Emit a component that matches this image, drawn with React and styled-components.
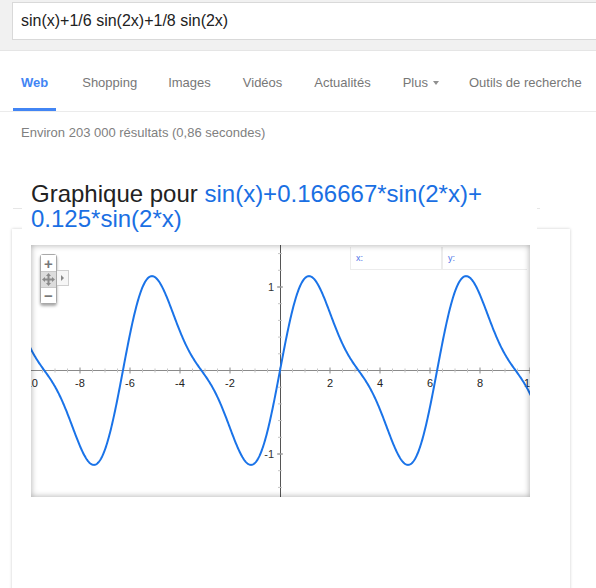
import React from 'react';
import styled, { createGlobalStyle } from 'styled-components';

const Global = createGlobalStyle`
  html, body { margin: 0; padding: 0; background: #fff; }
  body { font-family: Arial, "Liberation Sans", sans-serif; overflow: hidden; }
  * { box-sizing: border-box; }
`;

const Header = styled.header`
  height: 51px;
  background: #f1f1f1;
  border-bottom: 1px solid #e5e5e5;
  padding: 2px 0 0 12px;
`;

const SearchBox = styled.div`
  height: 38px;
  background: #fff;
  border: 1px solid #d9d9d9;
  border-right: none;
  padding-left: 8px;
  font-size: 16px;
  line-height: 36px;
  color: #222;
  white-space: nowrap;
`;

const Nav = styled.nav`
  display: flex;
  gap: 16px;
  padding-left: 13px;
  border-bottom: 1px solid #ebebeb;
`;

const Tab = styled.div`
  height: 60px;
  padding: 24px 8px 0;
  margin-left: ${p => p.$shift || 0}px;
  font-size: 13px;
  line-height: 15px;
  white-space: nowrap;
  color: ${p => (p.$active ? '#4285f4' : '#777')};
  font-weight: ${p => (p.$active ? 'bold' : 'normal')};
  border-bottom: 3px solid ${p => (p.$active ? '#4285f4' : 'transparent')};
`;

const Caret = styled.span`
  display: inline-block;
  margin-left: 5px;
  vertical-align: 2px;
  border-left: 3.5px solid transparent;
  border-right: 3.5px solid transparent;
  border-top: 4px solid #909090;
`;

const Stats = styled.div`
  padding: 13px 0 0 21px;
  font-size: 13px;
  line-height: 15px;
  color: #808080;
`;

const HeadingArea = styled.div`
  position: relative;
  margin: 41px 0 0 12px;
  &::before {
    content: '';
    position: absolute;
    top: 27px;
    left: 1px;
    width: 527px;
    height: 1px;
    background: #e6e6e6;
  }
`;

const Heading = styled.h2`
  position: relative;
  z-index: 1;
  margin: 0 0 0 10px;
  width: 515px;
  padding: 0 0 2px 9px;
  background: #fff;
  font-size: 24px;
  line-height: 25px;
  font-weight: normal;
  color: #222;
`;

const Formula = styled.span`
  color: #1a6fe3;
`;

const Card = styled.section`
  margin: -4px 0 0 12px;
  width: 558px;
  height: 380px;
  background: #fff;
  box-shadow: 0 0 3px rgba(0, 0, 0, 0.2);
  padding: 16px 0 0 19px;
`;

const GraphBox = styled.div`
  position: relative;
  width: 499px;
  height: 252px;
  overflow: hidden;
  background: #fff;
  &::after {
    content: '';
    position: absolute;
    inset: 0;
    box-shadow: inset 0 0 6px rgba(0, 0, 0, 0.35);
    pointer-events: none;
  }
`;

const Plot = styled.svg`
  display: block;
`;

const ZoomControl = styled.div`
  position: absolute;
  left: 9px;
  top: 9px;
  width: 17px;
  display: flex;
  flex-direction: column;
  background: #fff;
  border: 1px solid #a8a8a8;
  border-radius: 3px;
  box-shadow: 0 2px 3px rgba(0, 0, 0, 0.35);
`;

const ZoomButton = styled.div`
  height: 16px;
  display: flex;
  align-items: center;
  justify-content: center;
  background: ${p => (p.$pressed ? '#dcdcdc' : '#fff')};
  border-top: ${p => (p.$first ? 'none' : '1px solid #c8c8c8')};
  color: #777;
  font-size: 15px;
  font-weight: bold;
  line-height: 1;
`;

const SideTab = styled.div`
  position: absolute;
  left: 26px;
  top: 25px;
  width: 12px;
  height: 16px;
  background: #f6f6f6;
  border: 1px solid #cfcfcf;
  border-left: none;
  display: flex;
  align-items: center;
  justify-content: center;
  &::before {
    content: '';
    border-top: 3px solid transparent;
    border-bottom: 3px solid transparent;
    border-left: 3px solid #888;
  }
`;

const Coords = styled.div`
  position: absolute;
  top: 2px;
  left: 319px;
  right: 3px;
  height: 23px;
  display: grid;
  grid-template-columns: 90px 1fr;
  border-left: 1px solid #ececec;
  border-bottom: 1px solid #ececec;
  background: #fff;
`;

const Coord = styled.div`
  padding: 6px 0 0 5px;
  font-size: 9px;
  color: #4f74e8;
  border-left: ${p => (p.$divided ? '2px solid #ececec' : 'none')};
`;

const W = 499;
const H = 252;
const X0 = 249;
const Y0 = 125.5;
const SX = 25;
const SY = 83.5;
const f = x => Math.sin(x) + (1 / 6 + 1 / 8) * Math.sin(2 * x);

function buildPath() {
  let d = '';
  for (let px = -2; px <= W + 2; px += 0.5) {
    const x = (px - X0) / SX;
    const py = Y0 - f(x) * SY;
    d += (d ? 'L' : 'M') + px.toFixed(2) + ' ' + py.toFixed(2);
  }
  return d;
}

const curve = buildPath();

function Chart() {
  const xTicks = [];
  for (let k = -20; k <= 20; k++) {
    const px = X0 + k * 12.5;
    const major = k % 4 === 0;
    xTicks.push(
      <line key={'xt' + k} x1={px} x2={px} y1={Y0 - (major ? 3 : 2)} y2={Y0 + (major ? 3 : 2)}
        stroke={major ? '#888' : '#c4c4c4'} strokeWidth="1" />
    );
    if (major && k !== 0) {
      xTicks.push(
        <text key={'xl' + k} x={px} y={Y0 + 16} textAnchor="middle" fontSize="11"
          fontFamily="Arial, 'Liberation Sans', sans-serif" fill="#222">{k / 2}</text>
      );
    }
  }
  const yTicks = [];
  for (let k = -7; k <= 7; k++) {
    if (k === 0) continue;
    const py = Y0 - k * 0.2 * SY;
    yTicks.push(
      <line key={'yt' + k} x1={X0 - 2} x2={X0 + 2} y1={py} y2={py} stroke="#c4c4c4" strokeWidth="1" />
    );
  }
  [1, -1].forEach(v => {
    const py = Y0 - v * SY;
    yTicks.push(
      <line key={'ym' + v} x1={X0 - 3} x2={X0 + 3} y1={py} y2={py} stroke="#888" strokeWidth="1" />
    );
    yTicks.push(
      <text key={'yl' + v} x={X0 - 6} y={py + 4} textAnchor="end" fontSize="11"
        fontFamily="Arial, 'Liberation Sans', sans-serif" fill="#333">{v}</text>
    );
  });
  return (
    <Plot width={W} height={H} viewBox={`0 0 ${W} ${H}`}>
      <line x1="0" x2={W} y1={Y0} y2={Y0} stroke="#8a8a8a" strokeWidth="1" />
      <line x1={X0 + 0.5} x2={X0 + 0.5} y1="0" y2={H} stroke="#555" strokeWidth="1" />
      {xTicks}
      {yTicks}
      <path d={curve} fill="none" stroke="#1a73e8" strokeWidth="2" strokeLinejoin="round" />
    </Plot>
  );
}

function PanIcon() {
  return (
    <svg width="13" height="13" viewBox="0 0 13 13">
      <g fill="#8a8a8a">
        <rect x="5.5" y="2" width="2" height="9" />
        <rect x="2" y="5.5" width="9" height="2" />
        <polygon points="6.5,0 9,3 4,3" />
        <polygon points="6.5,13 9,10 4,10" />
        <polygon points="0,6.5 3,4 3,9" />
        <polygon points="13,6.5 10,4 10,9" />
      </g>
    </svg>
  );
}

const tabs = [
  { label: 'Web', shift: 0 },
  { label: 'Shopping', shift: 2 },
  { label: 'Images', shift: -1 },
  { label: 'Vidéos', shift: 0 },
  { label: 'Actualités', shift: 0 },
];

export default function App() {
  return (
    <>
      <Global />
      <Header>
        <SearchBox>sin(x)+1/6 sin(2x)+1/8 sin(2x)</SearchBox>
      </Header>
      <Nav>
        {tabs.map((t, i) => (
          <Tab key={t.label} $active={i === 0} $shift={t.shift}>{t.label}</Tab>
        ))}
        <Tab>Plus<Caret /></Tab>
        <Tab $shift={-2}>Outils de recherche</Tab>
      </Nav>
      <Stats>Environ 203 000 résultats (0,86 secondes)</Stats>
      <HeadingArea>
        <Heading>
          Graphique pour <Formula>sin(x)+0.166667*sin(2*x)+<br />0.125*sin(2*x)</Formula>
        </Heading>
      </HeadingArea>
      <Card>
        <GraphBox>
          <Chart />
          <ZoomControl>
            <ZoomButton $first>+</ZoomButton>
            <ZoomButton $pressed><PanIcon /></ZoomButton>
            <ZoomButton>−</ZoomButton>
          </ZoomControl>
          <SideTab />
          <Coords>
            <Coord>x:</Coord>
            <Coord $divided>y:</Coord>
          </Coords>
        </GraphBox>
      </Card>
    </>
  );
}
